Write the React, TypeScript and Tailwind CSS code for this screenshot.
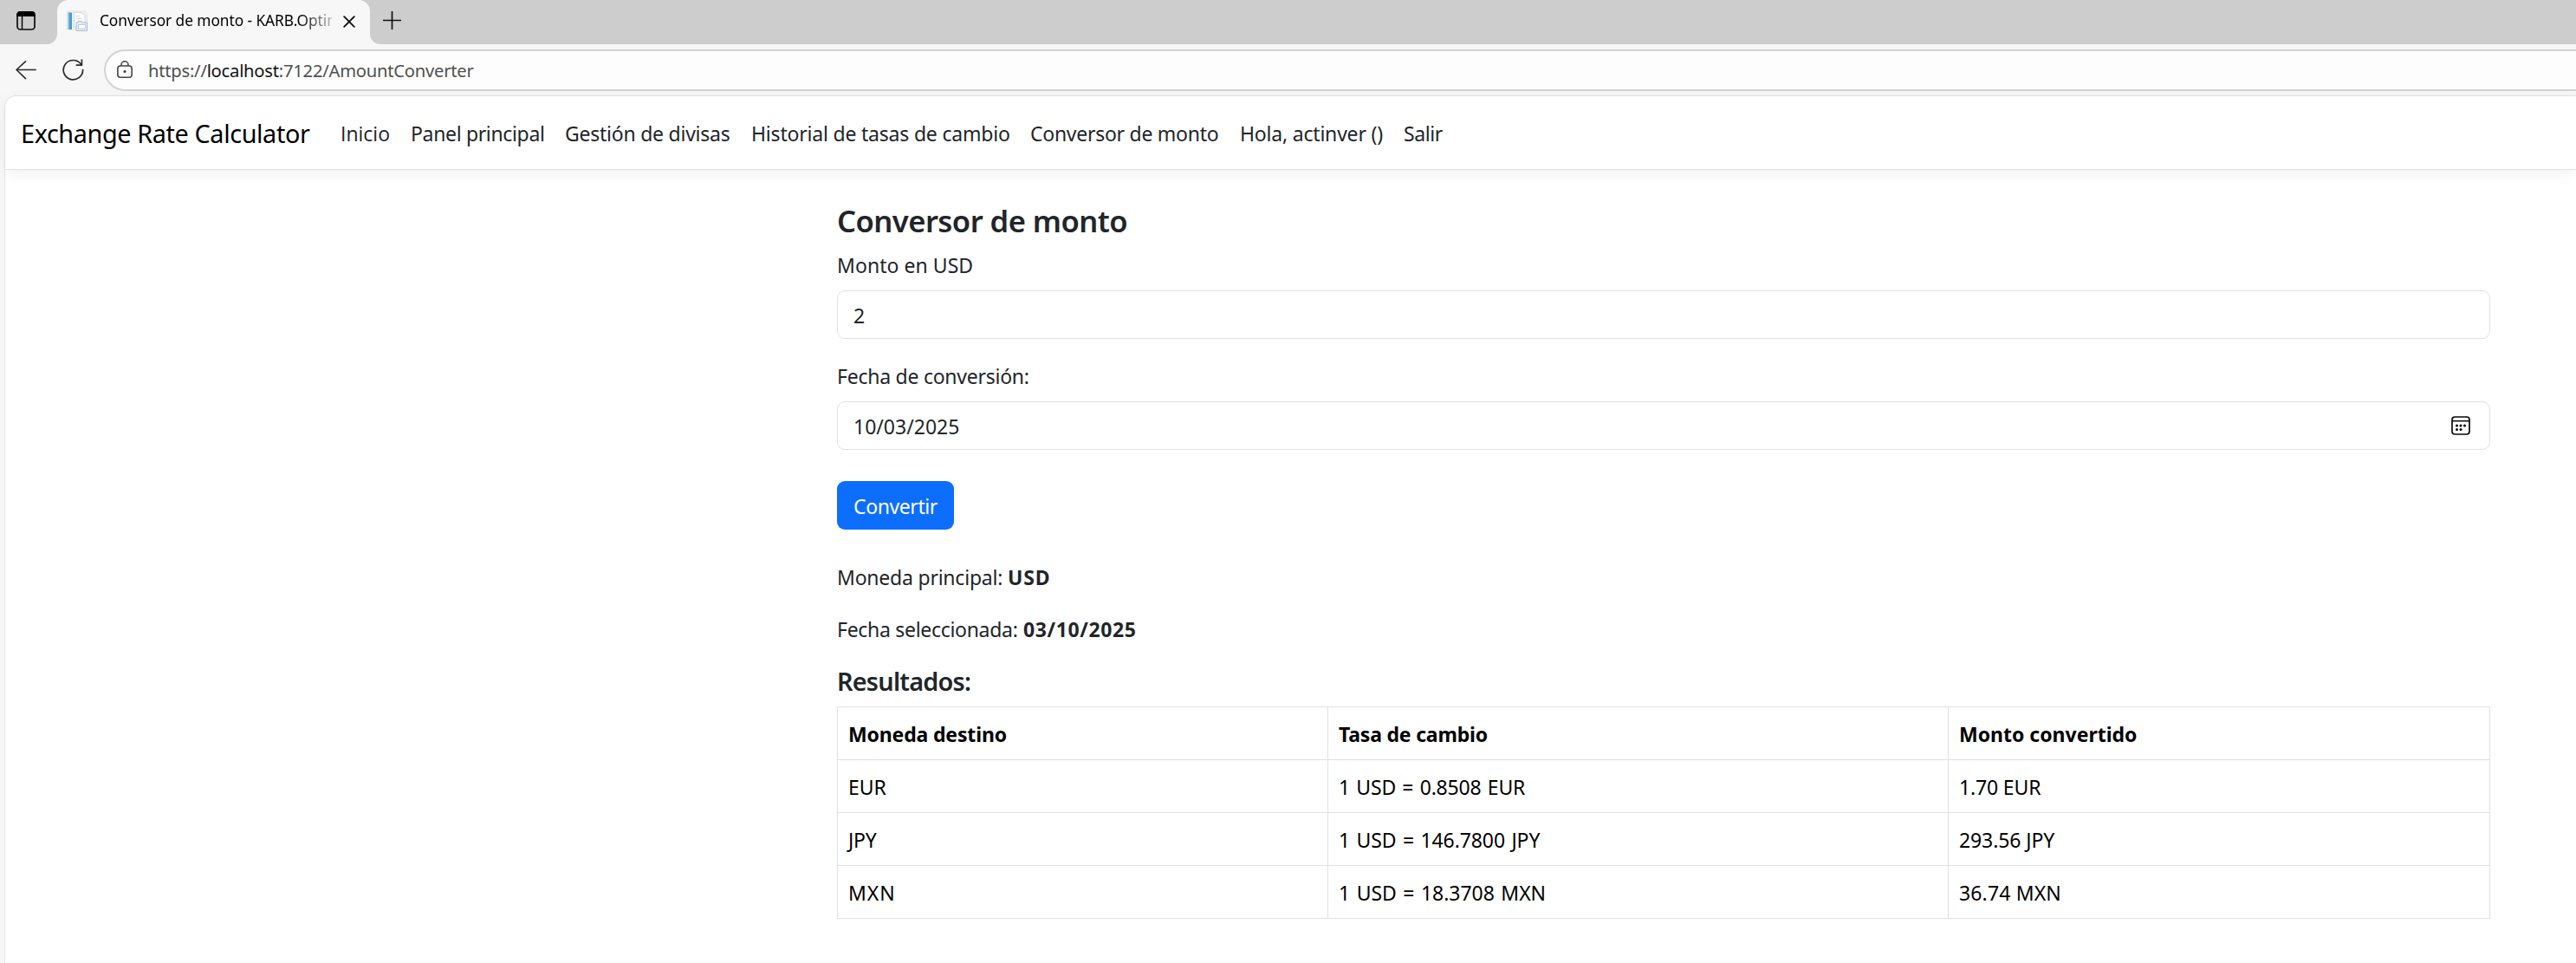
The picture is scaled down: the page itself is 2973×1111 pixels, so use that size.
const navItems = [
  { label: 'Inicio', style: "w-[81px] tracking-[0px] font-['Open_Sans']" },
  { label: 'Panel principal', style: 'w-[178px] tracking-[-0.34px]' },
  { label: 'Gestión de divisas', style: 'w-[215px] tracking-[-0.24px]' },
  { label: 'Historial de tasas de cambio', style: 'w-[322px] tracking-[-0.2px]' },
  { label: 'Conversor de monto', style: 'w-[242px] tracking-[-0.27px]' },
  { label: 'Hola, actinver ()', style: 'w-[189px] tracking-[-0.2px]' },
  { label: 'Salir', style: 'tracking-[-0.4px]' },
];

const results = [
  { code: 'EUR', rate: '1 USD = 0.8508 EUR', amount: '1.70 EUR', codeStyle: 'tracking-[0px]', rateStyle: 'tracking-[-0.2px] [word-spacing:1.6px]', amountStyle: 'tracking-[-0.15px]' },
  { code: 'JPY', rate: '1 USD = 146.7800 JPY', amount: '293.56 JPY', codeStyle: 'tracking-[-0.2px]', rateStyle: 'tracking-[-0.1px] [word-spacing:1.6px]', amountStyle: 'tracking-[-0.1px]' },
  { code: 'MXN', rate: '1 USD = 18.3708 MXN', amount: '36.74 MXN', codeStyle: 'tracking-[1px]', rateStyle: 'tracking-[-0.04px] [word-spacing:1.6px]', amountStyle: 'tracking-[0.15px]' },
];

function WorkspacesIcon() {
  return (
    <svg className="ml-[19px] mt-[13px] size-[22px]" viewBox="0 0 22 22" fill="none">
      <rect x="1" y="1" width="20" height="20" rx="3.5" stroke="#0a0a0a" strokeWidth="1.7" />
      <path d="M.2 6V4A4 4 0 0 1 4.200 .1H17.800A4 4 0 0 1 21.800 4V6Z" fill="#000" />
      <path d="M6.500 6V21" stroke="#0a0a0a" strokeWidth="1.500" />
    </svg>
  );
}

function Favicon() {
  return (
    <svg className="size-6 shrink-0" viewBox="0 0 24 24" fill="none">
      <path d="M.5 1H21L23.500 4V22H.5Z" fill="#eef0f2" stroke="#dde1e5" strokeWidth=".8" />
      <rect x="1.800" y="2.500" width="4.200" height="19.500" fill="#4a9bd0" />
      <rect x="1.800" y="2.500" width="1.500" height="19.500" fill="#76b8de" />
      <path d="M8.500 2.500H17L21 6V19H8.500Z" fill="#fbfcfd" stroke="#c9d0d8" strokeWidth=".8" />
      <path d="M10.500 6.500H15M10.500 9.500H18" stroke="#d3d9e2" strokeWidth="1.200" />
      <path d="M11 14H13V12.500H17V14H23.500V23.500H11Z" fill="#e6edf6" stroke="#a5b5c9" strokeWidth=".9" />
      <rect x="13.500" y="16.500" width="8" height="4.500" fill="#fff" stroke="#afc0d5" strokeWidth=".8" />
    </svg>
  );
}

function BackIcon() {
  return (
    <svg className="h-[22px] w-6" viewBox="0 0 24 22" fill="none" stroke="#2b2b2b" strokeWidth="1.600" strokeLinecap="round" strokeLinejoin="round">
      <path d="M23.200 10.500H1M11.500 .9L1 10.500L11.500 20.600" />
    </svg>
  );
}

function ReloadIcon() {
  return (
    <svg className="h-[25px] w-[26px]" viewBox="0 0 26 25" fill="none" stroke="#2b2b2b" strokeWidth="1.700" strokeLinecap="round" strokeLinejoin="round">
      <path d="M23.600 12.500A11.200 11.200 0 1 1 21.600 6.300" />
      <path d="M22.400 1V7.200H16.400" />
    </svg>
  );
}

function LockIcon() {
  return (
    <svg className="h-5 w-[18px]" viewBox="0 0 18 20" fill="none" stroke="#454545" strokeWidth="1.600">
      <rect x=".9" y="6" width="16.200" height="13.200" rx="3" />
      <path d="M5 6V4.800A4 4 0 0 1 13 4.800V6" />
      <circle cx="9" cy="12.600" r="1.500" fill="#333" stroke="none" />
    </svg>
  );
}

function CalendarIcon() {
  return (
    <svg className="size-[22px]" viewBox="0 0 22 22" fill="none">
      <rect x="1" y="1" width="20" height="20" rx="3.200" stroke="#0a0a0a" strokeWidth="1.700" />
      <path d="M1 5.700H21" stroke="#0a0a0a" strokeWidth="1.500" />
      <g fill="#000">
        <circle cx="6.500" cy="11" r="1.500" />
        <circle cx="11" cy="11" r="1.500" />
        <circle cx="15.500" cy="11" r="1.500" />
        <circle cx="6.500" cy="15.500" r="1.500" />
        <circle cx="11" cy="15.500" r="1.500" />
      </g>
    </svg>
  );
}

function TabStrip() {
  return (
    <div className="flex h-[51px] bg-[#cdcdcd]">
      <div className="flex w-[54px] shrink-0">
        <WorkspacesIcon />
      </div>
      <div className="w-3 bg-[#f7f7f7]">
        <div className="h-full rounded-br-[12px] bg-[#cdcdcd]" />
      </div>
      <div className="flex w-[361px] rounded-t-[13px] bg-[#f7f7f7]">
        <div className="ml-[11px] mt-3">
          <Favicon />
        </div>
        <div className="ml-[14px] mt-[9px] h-[30px] w-[268px] overflow-hidden whitespace-nowrap text-[17.300px] leading-[30px] tracking-[-0.05px] text-black [mask-image:linear-gradient(to_right,#000_86%,rgba(0,0,0,0.25)_100%)]">
          Conversor de monto - KARB.Optim
        </div>
        <svg className="ml-[13px] mt-[18px] size-[14px]" viewBox="0 0 14 14" stroke="#111" strokeWidth="1.900" strokeLinecap="round">
          <path d="M1.200 1.200L12.800 12.800M12.800 1.200L1.200 12.800" />
        </svg>
      </div>
      <div className="w-3 bg-[#f7f7f7]">
        <div className="h-full rounded-bl-[12px] bg-[#cdcdcd]" />
      </div>
      <svg className="ml-[3px] mt-[13px] size-[21px]" viewBox="0 0 21 21" stroke="#111" strokeWidth="1.700">
        <path d="M10.500 0V21M0 10.500H21" />
      </svg>
    </div>
  );
}

function Toolbar() {
  return (
    <div className="flex h-[59px] bg-[#f7f7f7]">
      <div className="ml-[18px] mt-[19px]">
        <BackIcon />
      </div>
      <div className="ml-[30px] mt-[17px]">
        <ReloadIcon />
      </div>
      <div className="ml-[22px] mt-1.5 flex h-12 flex-1 rounded-l-full border-2 border-r-0 border-[#d3d3d3] bg-[#fdfdfd]">
        <div className="ml-[13px] mt-[11px]">
          <LockIcon />
        </div>
        <div className="ml-[18px] mt-[6px] text-[20.200px] leading-8 tracking-[-0.24px] text-[#505050]">
          https://<span className="text-[#111]">localhost</span>:7122/AmountConverter
        </div>
      </div>
    </div>
  );
}

function Navbar() {
  return (
    <header className="flex h-[85px] rounded-tl-[13px] border-b border-[#dee2e6] bg-white shadow-[0_4px_18px_rgba(0,0,0,0.06)]">
      <div className="ml-[18px] mt-5 w-[369px] text-[28.800px] leading-[45px] tracking-[-0.38px] text-black">
        Exchange Rate Calculator
      </div>
      <nav className="mt-[25px] flex whitespace-nowrap leading-9">
        {navItems.map((item) => (
          <a key={item.label} className={item.style}>
            {item.label}
          </a>
        ))}
      </nav>
    </header>
  );
}

function ResultsTable() {
  return (
    <table className="mt-[11px] w-[1908px] table-fixed border-separate border-spacing-0 border-l border-t border-[#dee2e6] text-left text-black [&_td]:h-[61px] [&_td]:border-b [&_td]:border-r [&_td]:border-[#dee2e6] [&_td]:pl-3 [&_td]:pt-0.5 [&_td]:leading-9 [&_th]:h-[61px] [&_th]:border-b [&_th]:border-r [&_th]:border-[#dee2e6] [&_th]:pl-3 [&_th]:pt-0.5 [&_th]:leading-9">
      <thead>
        <tr>
          <th className="w-[566px] tracking-[-0.15px]">Moneda destino</th>
          <th className="w-[716px] tracking-[-0.2px]">Tasa de cambio</th>
          <th className="tracking-[0px]">Monto convertido</th>
        </tr>
      </thead>
      <tbody>
        {results.map((row) => (
          <tr key={row.code}>
            <td className={row.codeStyle}>{row.code}</td>
            <td className={row.rateStyle}>{row.rate}</td>
            <td className={row.amountStyle}>{row.amount}</td>
          </tr>
        ))}
      </tbody>
    </table>
  );
}

export default function App() {
  return (
    <div className="h-[1111px] w-[2973px] overflow-hidden bg-[#f7f7f7] font-['Noto_Sans',sans-serif] text-[23px] text-[#212529]">
      <TabStrip />
      <Toolbar />
      <div className="ml-[5px] h-[1001px] rounded-tl-[14px] border-l border-t border-[#e4e4e4] bg-white">
        <Navbar />
        <main className="ml-[960px] w-[1908px] pt-[37px]">
          <h2 className="text-[34.600px] font-semibold leading-[43px] tracking-[-0.54px]">Conversor de monto</h2>
          <label className="mt-3 block leading-9 tracking-[0.05px]">Monto en USD</label>
          <div className="mt-[11px] flex h-14 items-center rounded-[9px] border border-[#dee2e6] pl-[18px] pt-0.5">2</div>
          <label className="mt-[25px] block leading-9 tracking-[-0.25px]">Fecha de conversión:</label>
          <div className="mt-[11px] flex h-14 items-center justify-between rounded-[9px] border border-[#dee2e6] pl-[18px] pr-[22px]">
            <span className="pt-0.5">10/03/2025</span>
            <CalendarIcon />
          </div>
          <button className="mt-9 flex h-14 w-[135px] items-center rounded-[9px] bg-[#0d6efd] pl-[19px] pt-0.5 tracking-[-0.4px] text-white">
            Convertir
          </button>
          <p className="mt-[37px] flex leading-9">
            <span className="w-[197px] tracking-[-0.22px]">Moneda principal:</span>
            <strong className="tracking-[0.8px]">USD</strong>
          </p>
          <p className="mt-6 flex leading-9">
            <span className="w-[215px] tracking-[-0.3px]">Fecha seleccionada:</span>
            <strong className="tracking-[0.63px]">03/10/2025</strong>
          </p>
          <h4 className="mt-6 text-[28.800px] font-semibold leading-9 tracking-[-0.76px]">Resultados:</h4>
          <ResultsTable />
        </main>
      </div>
    </div>
  );
}
